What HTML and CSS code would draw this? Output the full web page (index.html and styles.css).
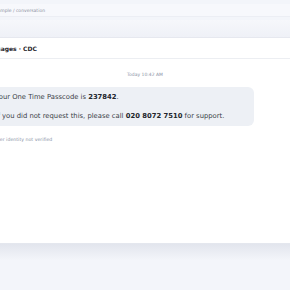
FILE: index.html
```html
<!DOCTYPE html>
<html>
<head>
<meta charset="utf-8">
<link rel="stylesheet" href="styles.css">
</head>
<body>
<div class="shell">
  <div class="crumbs">Example / conversation</div>
  <div class="toolbar"></div>
  <div class="card">
    <div class="card-head">Messages · CDC</div>
    <div class="thread">
      <div class="stamp">Today 10:42 AM</div>
      <div class="bubble">
        <p>Your One Time Passcode is <b>237842</b>.</p>
        <p>If you did not request this, please call <b>020 8072 7510</b> for support.</p>
      </div>
      <div class="note">Sender identity not verified</div>
    </div>
  </div>
  <div class="shade"></div>
</div>
</body>
</html>
```
FILE: styles.css
```css
html, body {
  margin: 0;
  padding: 0;
  background: #f3f5fa;
  font-family: "DejaVu Sans", sans-serif;
  overflow: hidden;
}
.shell {
  margin: 0 -40px;
  padding-top: 4px;
}
.crumbs {
  height: 12px;
  line-height: 13px;
  font-size: 4.5px;
  color: #8a90a0;
  background: #f7f8fc;
  border-bottom: 1px solid #eceef4;
  padding-left: 32px;
}
.toolbar {
  margin-top: 3px;
  height: 17px;
  background: linear-gradient(#f6f7fb, #eff1f7);
  border-bottom: 1px solid #e6e8ef;
}
.card {
  background: #ffffff;
  height: 205px;
  border-bottom: 1px solid #e4e7ee;
}
.card-head {
  height: 20px;
  line-height: 21px;
  font-size: 6px;
  font-weight: bold;
  color: #1f2329;
  padding-left: 23.5px;
  border-bottom: 1px solid #eceef2;
}
.thread {
  padding: 12px 0 0 25.5px;
}
.stamp {
  margin-left: -25.5px;
  text-align: center;
  font-size: 4.5px;
  color: #8a93a6;
  line-height: 7px;
}
.bubble {
  margin-top: 9px;
  width: 248px;
  background: #edf0f5;
  border-radius: 6px;
  padding: 5px 10px;
}
.bubble p {
  margin: 0;
  font-size: 6.8px;
  line-height: 10px;
  color: #3a3f47;
  white-space: nowrap;
}
.bubble p + p {
  margin-top: 9px;
}
.bubble b {
  color: #22262c;
}
.note {
  margin: 10px 0 0 2.5px;
  font-size: 4.7px;
  color: #8a93a6;
  line-height: 7px;
}
.shade {
  height: 60px;
  background: linear-gradient(#e2e5ed, #f3f5fa 16px);
}
```
